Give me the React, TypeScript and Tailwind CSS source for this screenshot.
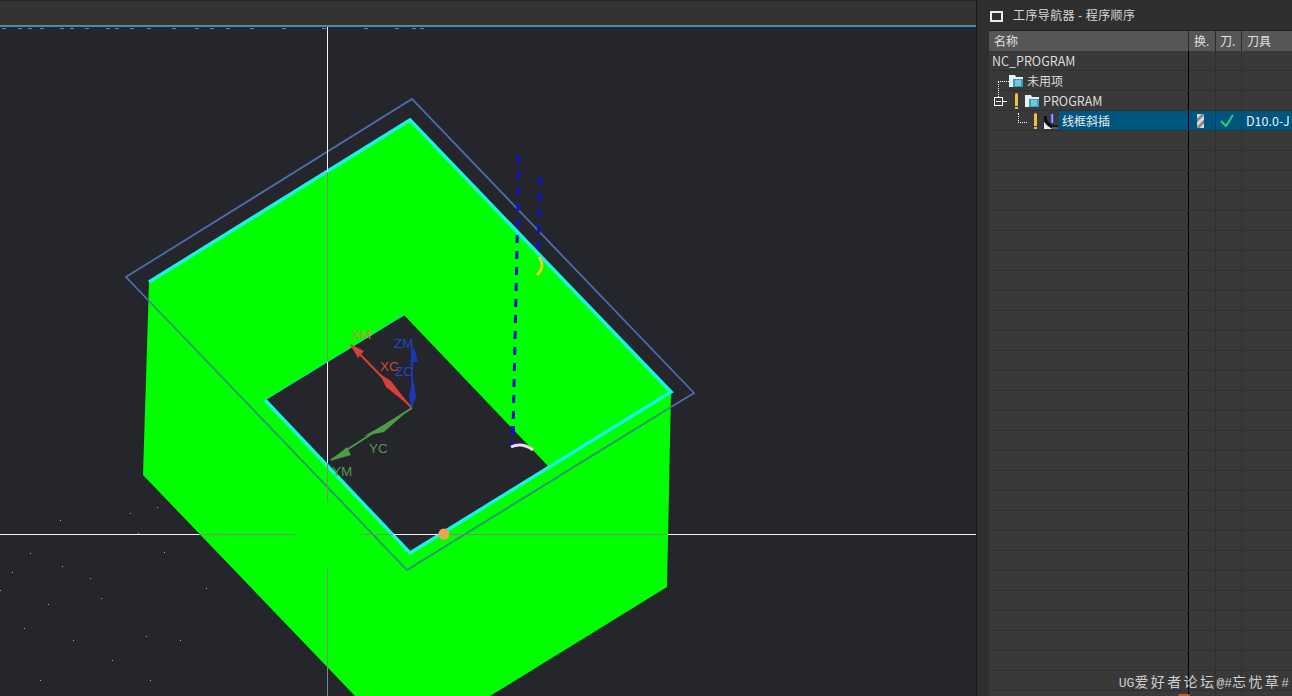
const sans = "font-['Noto_Sans_CJK_SC','Noto_Sans',sans-serif]";

const rowGrid = "grid grid-cols-[200px_27px_26px_1fr] h-5 bg-[#393939] border-b border-[#303030]";
const rows = Array.from({ length: 32 });

const specks = [
  [30, 553], [62, 566], [12, 572], [130, 513], [157, 507], [101, 598], [0, 590], [146, 636], [112, 660], [73, 640],
  [48, 604], [24, 628], [206, 588], [164, 552], [90, 578], [138, 533], [180, 640], [60, 520], [40, 680], [150, 680],
  [364, 468], [393, 467], [412, 467], [422, 468], [378, 499], [393, 499], [398, 500], [412, 500], [432, 499],
];

// ticks under the top line of the viewport
const ticks = [2, 18, 28, 40, 60, 70, 85, 106, 115, 130, 147, 172, 195, 210, 226, 250, 282, 322, 364, 395, 412, 420];

// tree icons
function Folder() {
  return (
    <svg className="shrink-0" width="14" height="14" viewBox="0 0 14 14">
      <path d="M0 1h6l1 2h7v10H0z" fill="#e6f2f5" />
      <path d="M4 5h10v8H4z" fill="#2f9fc4" />
      <path d="M6 7h6M6 9h6M6 11h6" stroke="#bfeaf6" strokeWidth="1" />
    </svg>
  );
}

function OpIcon() {
  return (
    <svg className="shrink-0" width="15" height="18" viewBox="0 0 15 18">
      <path d="M0 10 0 17H8Z" fill="#e4ece8" />
      <path d="M1 4c0 5 3 9 8 11h5" stroke="#0a0e12" strokeWidth="3" fill="none" />
      <path d="M8 15h6v2H8z" fill="#2f6f78" />
      <path d="M6 2h4v9H6z" fill="#3a36b0" />
      <path d="M7.5 2H9v9H7.5z" fill="#b0a8f0" />
    </svg>
  );
}

function Bang() {
  return (
    <span className="w-[3px] h-[16px] shrink-0 flex flex-col gap-px">
      <span className="flex-1 bg-[#f0c040] rounded-t-sm" />
      <span className="h-[2px] bg-[#f0c040]" />
    </span>
  );
}

function Scene() {
  return (
    <svg width="976" height="669" viewBox="0 27 976 669" className="block">
      <rect x="0" y="27" width="976" height="3" fill="#1d2a3c" />
      <g fill="#7b8590">
        {ticks.map((x) => (
          <rect key={x} x={x} y="28" width="4" height="1" />
        ))}
      </g>
      <g fill="#a4aaaa">
        {specks.map(([x, y], i) => (
          <rect key={i} x={x} y={y} width="1" height="1" />
        ))}
      </g>

      {/* solid */}
      <path d="M149 282 410 120 671 392 667 587 490 696H355L143 475Z" fill="#00ff00" />
      <path d="M404 315 265 400 410 553 548 466Z" fill="#24262b" />
      <path d="M149 282 410 120 671 392 410 553 265 400" stroke="#1ff0e6" strokeWidth="3.5" fill="none" />
      <path d="M265 400 404 315" stroke="#19e0b0" strokeWidth="1" fill="none" />

      {/* blank outline */}
      <path d="M149 301 126 277 412 99 694 393 671 407" stroke="#4f6bad" strokeWidth="1.8" fill="none" />
      <path d="M149 301 407 570 671 407" stroke="#2f8f78" strokeWidth="1.8" fill="none" />

      {/* crosshair */}
      <path d="M327.5 27V172M327.5 362V463" stroke="#f2f2f2" strokeWidth="1" />
      <path d="M327.5 172V362M327.5 463V502M327.5 568V696" stroke="#788c78" strokeWidth="1" />
      <path d="M0 534.5H199M393 534.5H438M668 534.5H976" stroke="#f2f2f2" strokeWidth="1" />
      <path d="M199 534.5H295M360 534.5H393M448 534.5H668" stroke="#788c78" strokeWidth="1" />
      <circle cx="444" cy="534" r="5.5" fill="#eda24e" />

      {/* tool path */}
      <path d="M519 155 513 432" stroke="#0a14d0" strokeWidth="3" strokeDasharray="8 8" fill="none" />
      <path d="M540 177 538 256" stroke="#0a14d0" strokeWidth="3" strokeDasharray="8 8" fill="none" />
      <rect x="511" y="426" width="4" height="9" fill="#0a14d0" />
      <rect x="510" y="442" width="4" height="3" fill="#0a14d0" />
      <path d="M539 257Q546 267 537 275" stroke="#e8d020" strokeWidth="2.5" fill="none" />
      <path d="M511 447Q522 442 533 450" stroke="#f4d8f0" strokeWidth="3" fill="none" />

      {/* WCS axes */}
      <path d="M412 408 351 345" stroke="#d8403a" strokeWidth="2" />
      <path d="M350 344 364 351 358 358Z" fill="#d8403a" />
      <path d="M380 374 391 381 411 407 386 387Z" fill="#d8403a" />
      <path d="M412 408V348" stroke="#1a38b4" strokeWidth="2" />
      <path d="M414 347 410 362H418Z" fill="#1a38b4" />
      <path d="M413 378 409 396 412 408 416 396Z" fill="#1a38b4" />
      <path d="M412 408 331 460" stroke="#4c9c46" strokeWidth="2" />
      <path d="M330 461 347 447 351 455Z" fill="#4c9c46" />
      <path d="M364 436 380 427 411 408 384 432Z" fill="#4c9c46" />

      <g className="font-['Liberation_Sans',sans-serif] text-[13.5px]">
        <text x="351" y="339" fill="#b89a30">XM</text>
        <text x="380" y="371" fill="#d8403a">XC</text>
        <text x="394" y="348" fill="#1f45c0">ZM</text>
        <text x="395" y="376" fill="#1f45c0">ZC</text>
        <text x="369" y="453" fill="#4f9a48">YC</text>
        <text x="332" y="476" fill="#4f9a48">YM</text>
      </g>
    </svg>
  );
}

function NavPanel() {
  return (
    <div className={`relative flex-1 min-w-0 flex flex-col bg-[#2f2f2f] text-[#dcdcdc] text-xs ${sans}`}>
      <div className="h-[30px] pl-[13px] flex items-center gap-[10px] shrink-0">
        <span className="w-[13px] h-[11px] mt-[3px] border-2 border-[#ececec]" />
        <span className="text-[#d8d8d8] tracking-[0.4px]">工序导航器 - 程序顺序</span>
      </div>
      <div className="flex-1 min-h-0 ml-[12px] overflow-hidden">
        <div className="grid grid-cols-[200px_27px_26px_1fr] h-[21px] bg-[#565656] border-t border-[#222] text-[#e0e0e0]">
          <span className="pl-[5px] leading-[20px] border-r border-[#2a2a2a]">名称</span>
          <span className="pl-[5px] leading-[20px] border-r border-[#2a2a2a]">换.</span>
          <span className="pl-[4px] leading-[20px] border-r border-[#2a2a2a]">刀.</span>
          <span className="pl-[5px] leading-[20px]">刀具</span>
        </div>
        <div className={rowGrid}>
          <span className="pl-[3px] leading-[20px] border-r border-black text-[12.5px]">NC_PROGRAM</span>
          <span className="border-r border-[#303030]" />
          <span className="border-r border-[#303030]" />
          <span />
        </div>
        <div className={rowGrid}>
          <div className="relative flex items-center pl-[20px] gap-[4px] border-r border-black">
            <span className="absolute left-[9px] top-[10px] w-[11px] h-[16px] border-l border-t border-dotted border-white" />
            <Folder />
            <span>未用项</span>
          </div>
          <span className="border-r border-[#303030]" />
          <span className="border-r border-[#303030]" />
          <span />
        </div>
        <div className={rowGrid}>
          <div className="relative flex items-center pl-[26px] border-r border-black">
            <span className="absolute left-[5px] top-[6px] w-[9px] h-[9px] border border-white" />
            <span className="absolute left-[7px] top-[10px] w-[5px] h-px bg-white" />
            <span className="absolute left-[14px] top-[10px] w-[4px] h-px bg-white" />
            <Bang />
            <span className="w-[7px]" />
            <Folder />
            <span className="ml-[4px] pt-px text-[12.5px]">PROGRAM</span>
          </div>
          <span className="border-r border-[#303030]" />
          <span className="border-r border-[#303030]" />
          <span />
        </div>
        <div className={rowGrid}>
          <div className="relative flex items-center pl-[45px] border-r border-black">
            <span className="absolute left-[29px] top-[2px] w-[9px] h-[10px] border-l border-b border-dotted border-white" />
            <Bang />
            <span className="w-[7px]" />
            <OpIcon />
            <span className="pl-[3px] flex-1 h-[19px] leading-[19px] bg-[#00557f] text-[#e8f0f4]">线框斜插</span>
          </div>
          <div className="flex items-center justify-center pr-[4px] bg-[#00557f] border-r border-[#00446a]">
            <span className="w-[7px] h-[14px] bg-[repeating-linear-gradient(135deg,#d8d8d8_0_3px,#8c8c8c_3px_6px)]" />
          </div>
          <div className="flex items-center justify-center pr-[4px] bg-[#00557f] border-r border-[#00446a]">
            <svg width="14" height="13" viewBox="0 0 14 13">
              <path d="M1 7l5 5L13 1" stroke="#2fd06a" strokeWidth="2" fill="none" />
            </svg>
          </div>
          <span className="pl-[4px] leading-[19px] bg-[#00557f] text-[12.5px] text-[#e8f0f4] whitespace-nowrap">D10.0-J</span>
        </div>
        {rows.map((_, i) => (
          <div key={i} className={rowGrid}>
            <span className="border-r border-black" />
            <span className="border-r border-[#303030]" />
            <span className="border-r border-[#303030]" />
            <span />
          </div>
        ))}
      </div>
      <span className="absolute right-[102px] bottom-0 w-[12px] h-[2px] bg-[#c8562a] rounded-t" />
      <span className="absolute right-[3px] bottom-[4px] text-[13px] leading-4 text-[#cfcfcf] font-['Liberation_Mono','Noto_Sans_CJK_SC',monospace] whitespace-nowrap">
        UG<span className="text-[14px] tracking-[2.4px]">爱好者论坛</span>@#<span className="text-[14px] tracking-[2.4px]">忘忧草</span>#
      </span>
    </div>
  );
}

export default function App() {
  return (
    <div className="w-[1292px] h-[696px] overflow-hidden flex bg-[#2f2f2f]">
      <div className="w-[977px] shrink-0 flex flex-col border-r border-[#1a1a1a]">
        <div className="h-[25px] shrink-0 bg-[#333333] border-t border-[#262626]" />
        <div className="h-[2px] shrink-0 bg-[#56869c]" />
        <div className="flex-1 min-h-0 overflow-hidden bg-[#24262b]">
          <Scene />
        </div>
      </div>
      <NavPanel />
    </div>
  );
}
